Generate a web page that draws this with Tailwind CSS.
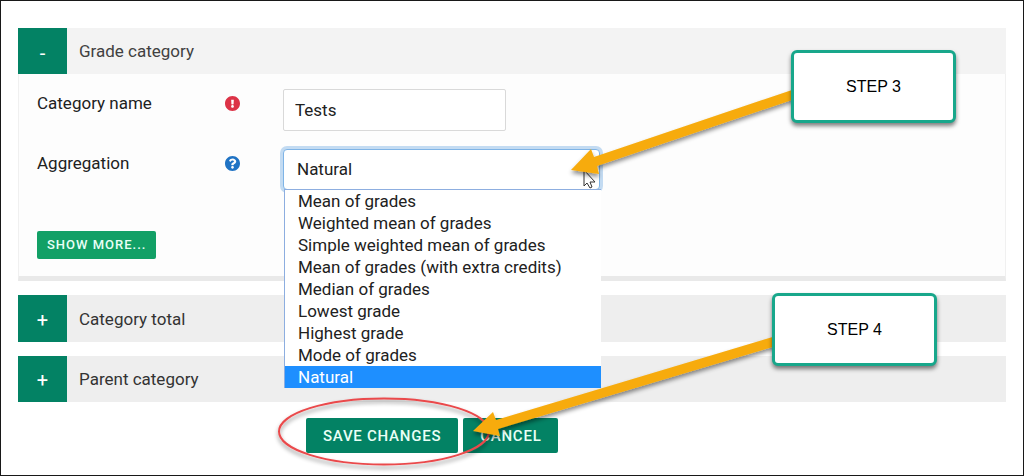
<!DOCTYPE html>
<html lang="en">
<head>
<meta charset="utf-8">
<meta name="viewport" content="width=device-width, initial-scale=1">
<title>Grade category settings</title>
<script src="https://cdn.jsdelivr.net/npm/@tailwindcss/browser@4"></script>
</head>
<body class="bg-white font-['Roboto',sans-serif] text-[17px] leading-6 text-[#212121]">
<main class="relative min-h-screen overflow-hidden border border-[#181818] pl-[17px] pr-[17px] pt-[27px]">
  <form class="flex flex-col">
    <section>
      <h2 class="flex h-[46px] items-stretch bg-[#f3f3f3]">
        <button type="button" aria-expanded="true" aria-label="Collapse Grade category" class="flex w-[49px] items-center justify-center bg-[#038264] text-xl text-white"><span class="pt-1">-</span></button>
        <span class="flex items-center px-3 text-[#414141]">Grade category</span>
      </h2>
      <div class="flex flex-col border-x border-b-[5px] border-x-[#f0f0f0] border-b-[#e9e9e9] bg-[#fdfdfd] px-[18px] pb-[17px] pt-[15px]">
        <div class="flex h-[60px] items-start">
          <div class="flex w-[246px] items-center pt-[2px]">
            <label for="name" class="w-[188px]">Category name</label>
            <svg class="size-[15px]" viewBox="8 8 496 496" fill="#dc3347" role="img" aria-label="Required"><path d="M504 256c0 136.997-111.043 248-248 248S8 392.997 8 256C8 119.083 119.043 8 256 8s248 111.083 248 248zm-248 50c-25.405 0-46 20.595-46 46s20.595 46 46 46 46-20.595 46-46-20.595-46-46-46zm-43.673-165.346l7.418 136c.347 6.364 5.609 11.346 11.982 11.346h48.546c6.373 0 11.635-4.982 11.982-11.346l7.418-136c.375-6.874-5.098-12.654-11.982-12.654h-63.383c-6.884 0-12.356 5.78-11.981 12.654z"/></svg>
          </div>
          <input id="name" type="text" value="Tests" class="h-[42px] w-[223px] rounded-xs border border-[#d9d9d9] bg-white px-[11px] outline-none">
        </div>
        <div class="flex h-[82px] items-start">
          <div class="flex w-[246px] items-center pt-[2px]">
            <label for="aggregation" class="w-[188px]">Aggregation</label>
            <svg class="size-[15px]" viewBox="8 8 496 496" fill="#2073c4" role="img" aria-label="Help"><path d="M504 256c0 136.997-111.043 248-248 248S8 392.997 8 256C8 119.083 119.043 8 256 8s248 111.083 248 248zM262.655 90c-54.497 0-89.255 22.957-116.549 63.758-3.536 5.286-2.353 12.415 2.715 16.258l34.699 26.31c5.205 3.947 12.621 3.008 16.665-2.122 17.864-22.658 30.113-35.797 57.303-35.797 20.429 0 45.698 13.148 45.698 32.958 0 14.976-12.363 22.667-32.534 33.976C247.128 238.528 216 254.941 216 296v4c0 6.627 5.373 12 12 12h56c6.627 0 12-5.373 12-12v-1.333c0-28.462 83.186-29.647 83.186-106.667 0-58.002-60.165-102-116.531-102zM256 338c-25.365 0-46 20.635-46 46 0 25.364 20.635 46 46 46s46-20.636 46-46c0-25.364-20.635-46-46-46z"/></svg>
          </div>
          <div class="relative w-[317px]">
            <select id="aggregation" class="h-[41px] w-full appearance-none rounded-sm border border-[#7fb4e6] bg-white px-[13px] pb-[2px] shadow-[0_0_0_3px_#c3dbf2] outline-none">
              <option>Natural</option>
            </select>
            <ul role="listbox" aria-label="Aggregation" class="absolute left-px top-[40px] z-10 w-[317px] border-l border-t border-[#8daee0] bg-white leading-[22px]">
              <li role="option" class="px-[13px]">Mean of grades</li>
              <li role="option" class="px-[13px]">Weighted mean of grades</li>
              <li role="option" class="px-[13px]">Simple weighted mean of grades</li>
              <li role="option" class="px-[13px]">Mean of grades (with extra credits)</li>
              <li role="option" class="px-[13px]">Median of grades</li>
              <li role="option" class="px-[13px]">Lowest grade</li>
              <li role="option" class="px-[13px]">Highest grade</li>
              <li role="option" class="px-[13px]">Mode of grades</li>
              <li role="option" aria-selected="true" class="bg-[#1e8fff] px-[13px] text-white">Natural</li>
            </ul>
          </div>
        </div>
        <button type="button" class="h-7 self-start rounded-xs bg-[#12a066] px-[10px] text-[13px] font-medium tracking-[1px] text-[#e9fff6]">SHOW MORE...</button>
      </div>
    </section>
    <h2 class="mt-[14px] flex h-[47px] items-stretch bg-[#eeeeee]">
      <button type="button" aria-expanded="false" aria-label="Expand Category total" class="flex w-[49px] items-center justify-center bg-[#038264] text-xl text-white"><span class="pt-[2px]">+</span></button>
      <span class="flex items-center px-3 text-[#333333]">Category total</span>
    </h2>
    <h2 class="mt-[14px] flex h-[46px] items-stretch bg-[#eeeeee]">
      <button type="button" aria-expanded="false" aria-label="Expand Parent category" class="flex w-[49px] items-center justify-center bg-[#038264] text-xl text-white"><span class="pt-[2px]">+</span></button>
      <span class="flex items-center px-3 text-[#333333]">Parent category</span>
    </h2>
    <div class="mt-4 flex gap-[5px] pl-72 text-[15px] font-medium text-[#e9fff6]">
      <button type="submit" class="h-[35px] rounded-xs bg-[#038264] px-[17px] tracking-wider">SAVE CHANGES</button>
      <button type="button" class="h-[35px] rounded-xs bg-[#038264] px-[17px] tracking-wider">CANCEL</button>
    </div>
  </form>

  <!-- Annotation layer: pointer, highlight ring, arrows and step callouts -->
  <svg class="pointer-events-none absolute -left-px -top-px z-20 h-[476px] w-[1024px]" viewBox="0 0 1024 476" aria-hidden="true">
    <defs><filter id="shade" x="-10%" y="-20%" width="120%" height="150%"><feDropShadow dx="0" dy="3" stdDeviation="2" flood-color="#000" flood-opacity=".45"/></filter></defs>
    <path d="M584 170V186L587 183L590 188L592 187L590 182H595Z" fill="#fff" stroke="#333" stroke-width="1"/>
    <ellipse cx="384" cy="431.5" rx="105" ry="33" fill="none" stroke="#ea4a4c" stroke-width="2" filter="url(#shade)"/>
    <path d="M571 170L591 149L594 157L795 89V99L597 166L599 174Z" fill="#f7ab0b" filter="url(#shade)"/>
    <path d="M473 431L493 412L496 420L776 336V346L498 429L500 436Z" fill="#f7ab0b" filter="url(#shade)"/>
  </svg>
  <div class="absolute left-[790px] top-[49px] z-30 flex h-[73px] w-[165px] items-center justify-center rounded-md border-[3px] border-[#18a78b] bg-white font-['Liberation_Sans',sans-serif] text-base text-black shadow-[0_3px_4px_rgba(0,0,0,0.5)]">STEP 3</div>
  <div class="absolute left-[771px] top-[292px] z-30 flex h-[73px] w-[165px] items-center justify-center rounded-md border-[3px] border-[#18a78b] bg-white font-['Liberation_Sans',sans-serif] text-base text-black shadow-[0_3px_4px_rgba(0,0,0,0.5)]">STEP 4</div>
</main>
</body>
</html>
